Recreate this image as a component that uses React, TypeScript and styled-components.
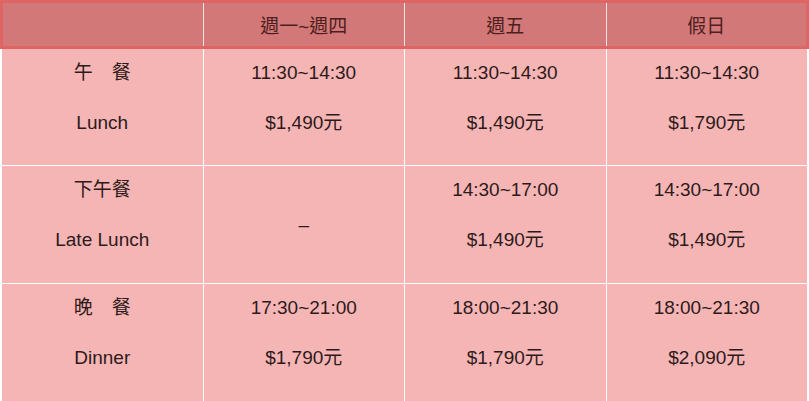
import styled, { createGlobalStyle } from "styled-components"

const GlobalStyle = createGlobalStyle`
    html, body {
        margin: 0;
        padding: 0;
        background: #ffffff;
    }
    body {
        font-family: "Liberation Sans", "Noto Sans CJK TC", sans-serif;
    }
`

const Table = styled.table`
    width: 100%;
    border-collapse: collapse;
    table-layout: fixed;
    font-size: 19px;
    color: #2e1a1a;
    text-align: center;
`

const HeadRow = styled.tr`
    background: #d27878;
    border: 3px solid #e06464;
`

const HeadCell = styled.th`
    height: 43px;
    padding: 0;
    font-weight: 400;
    color: #4e1e1e;
    border-left: 1px solid #f6e0e0;
    vertical-align: middle;
    &:first-child {
        border-left: none;
    }
`

const BodyRow = styled.tr`
    background: #f5b5b5;
`

const BodyCell = styled.td<{ $center?: boolean }>`
    height: 118px;
    box-sizing: border-box;
    padding: ${props => props.$center ? "0" : "11px 0 0"};
    border: 1px solid #ffffff;
    vertical-align: ${props => props.$center ? "middle" : "top"};
`

const Line = styled.div`
    line-height: 25px;
    & + & {
        margin-top: 25px;
    }
`

interface Meal {
    zh: string
    en: string
    prices: (string[] | null)[]
}

const meals: Meal[] = [
    {
        zh: "午　餐",
        en: "Lunch",
        prices: [
            ["11:30~14:30", "$1,490元"],
            ["11:30~14:30", "$1,490元"],
            ["11:30~14:30", "$1,790元"],
        ],
    },
    {
        zh: "下午餐",
        en: "Late Lunch",
        prices: [
            null,
            ["14:30~17:00", "$1,490元"],
            ["14:30~17:00", "$1,490元"],
        ],
    },
    {
        zh: "晚　餐",
        en: "Dinner",
        prices: [
            ["17:30~21:00", "$1,790元"],
            ["18:00~21:30", "$1,790元"],
            ["18:00~21:30", "$2,090元"],
        ],
    },
]

const days = ["週一~週四", "週五", "假日"]

function App() {
    return (
        <>
            <GlobalStyle />
            <Table>
                <thead>
                    <HeadRow>
                        <HeadCell></HeadCell>
                        {days.map(d => <HeadCell key={d}>{d}</HeadCell>)}
                    </HeadRow>
                </thead>
                <tbody>
                    {meals.map(meal => (
                        <BodyRow key={meal.en}>
                            <BodyCell>
                                <Line>{meal.zh}</Line>
                                <Line>{meal.en}</Line>
                            </BodyCell>
                            {meal.prices.map((p, i) => p ? (
                                <BodyCell key={i}>
                                    <Line>{p[0]}</Line>
                                    <Line>{p[1]}</Line>
                                </BodyCell>
                            ) : (
                                <BodyCell key={i} $center>–</BodyCell>
                            ))}
                        </BodyRow>
                    ))}
                </tbody>
            </Table>
        </>
    )
}

export default App
